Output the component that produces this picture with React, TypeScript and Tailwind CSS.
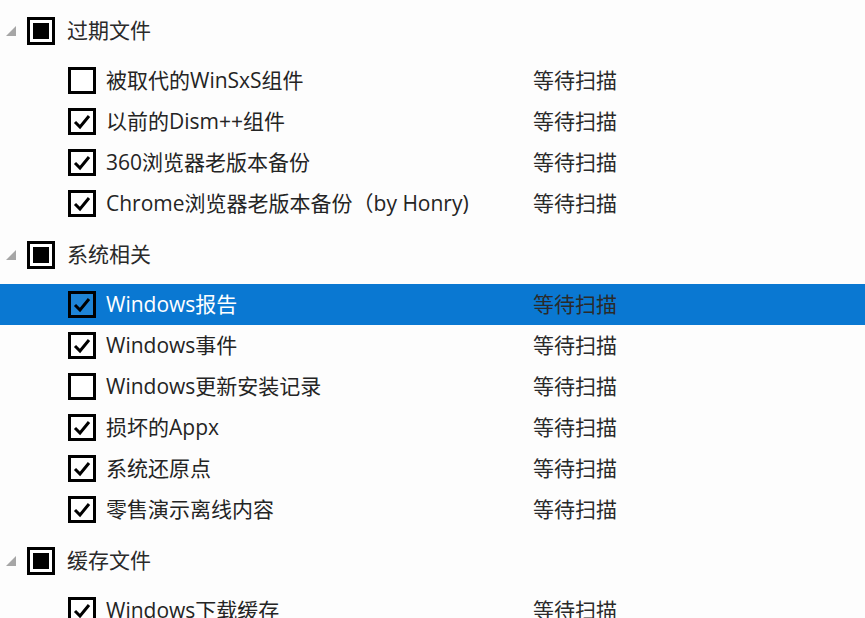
import React from 'react';

interface CleanItem {
  name: string;
  checked: boolean;
  selected?: boolean;
}

interface CleanGroup {
  title: string;
  items: CleanItem[];
}

const groups: CleanGroup[] = [
  {
    title: '过期文件',
    items: [
      { name: '被取代的WinSxS组件', checked: false },
      { name: '以前的Dism++组件', checked: true },
      { name: '360浏览器老版本备份', checked: true },
      { name: 'Chrome浏览器老版本备份（by Honry)', checked: true },
    ],
  },
  {
    title: '系统相关',
    items: [
      { name: 'Windows报告', checked: true, selected: true },
      { name: 'Windows事件', checked: true },
      { name: 'Windows更新安装记录', checked: false },
      { name: '损坏的Appx', checked: true },
      { name: '系统还原点', checked: true },
      { name: '零售演示离线内容', checked: true },
    ],
  },
  {
    title: '缓存文件',
    items: [{ name: 'Windows下载缓存', checked: true }],
  },
];

const font = { fontFamily: '"Segoe UI", "Open Sans", "Noto Sans CJK SC", sans-serif' };

function Expander() {
  return (
    <svg width="10" height="10" viewBox="0 0 10 10" className="shrink-0">
      <polygon points="10,0 10,10 0,10" fill="#a6a6a6" />
    </svg>
  );
}

function ItemBox({ checked, selected }: { checked: boolean; selected?: boolean }) {
  return (
    <div
      className={`w-[28px] h-[27px] border-[3px] border-black flex items-center justify-center shrink-0 ${
        selected ? 'bg-[#1e84d6]' : 'bg-white'
      }`}
    >
      {checked && (
        <svg width="20" height="19" viewBox="0 0 20 19">
          <polyline points="3,10 8,15 17,4" fill="none" stroke="black" strokeWidth="3" />
        </svg>
      )}
    </div>
  );
}

export default function App() {
  return (
    <div className="w-[865px] h-[618px] overflow-hidden bg-[#fdfdfd] text-[21px] text-[#242424]" style={font}>
      {groups.map((group) => (
        <div key={group.title}>
          {/* group header */}
          <div className="h-[60px] pt-[1px] flex items-center">
            <div className="w-[27px] pl-[6px] flex items-center">
              <Expander />
            </div>
            <div className="w-[28px] h-[28px] border-[3px] border-black bg-white p-[3px] shrink-0">
              <div className="w-full h-full bg-black" />
            </div>
            <span className="ml-[12px] text-[#2a2a2a]">{group.title}</span>
          </div>

          {group.items.map((item) => (
            <div
              key={item.name}
              className={`h-[41px] flex items-center ${item.selected ? 'bg-[#0a78d2]' : ''}`}
            >
              <div className="ml-[68px]">
                <ItemBox checked={item.checked} selected={item.selected} />
              </div>
              <span className={`ml-[10px] w-[427px] whitespace-nowrap ${item.selected ? 'text-white' : ''}`}>
                {item.name}
              </span>
              <span className="text-[#2a2a2a]">等待扫描</span>
            </div>
          ))}
        </div>
      ))}
    </div>
  );
}
